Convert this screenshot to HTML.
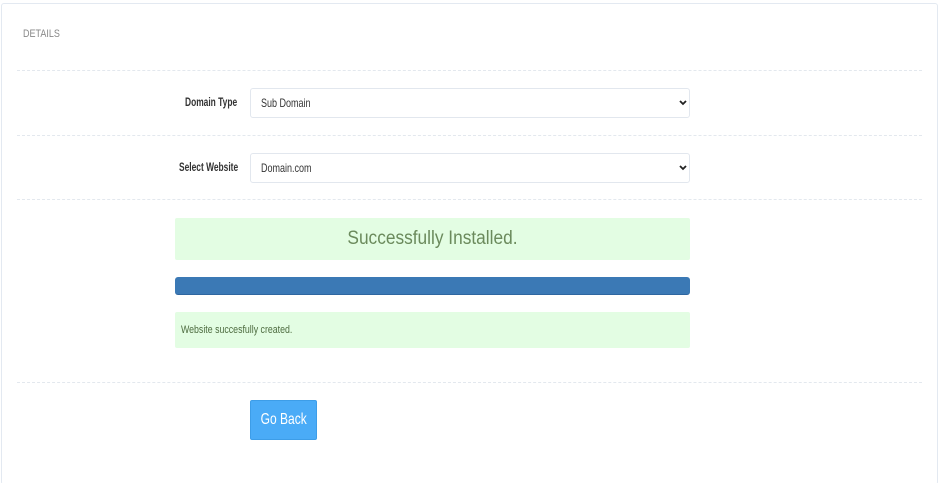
<!DOCTYPE html>
<html style="width:940px;height:483px;overflow:hidden"><head><meta charset="utf-8"><style>
*{box-sizing:border-box;margin:0;padding:0}
body{width:940px;height:483px;background:#fff;position:relative;overflow:hidden;font-family:"Liberation Sans",sans-serif}
.card{position:absolute;left:1px;top:3px;width:937px;height:482px;border:1px solid #e3e9f1;border-radius:3px}
.hr{position:absolute;left:17px;width:905px;border-top:1px dashed #e3e8ee}
.t{position:absolute;font-size:12px}
.c{display:inline-block;transform-origin:0 50%}
.sel{position:absolute;left:250px;width:440px;height:30px;border:1px solid #e2e7ee;border-radius:3px;font-size:12px;color:#333;padding:7px 10px;white-space:nowrap}
.sel svg{position:absolute;right:2px;top:11px}
.lab{position:absolute;font-size:12px;font-weight:bold;color:#333;white-space:nowrap}
</style></head><body>
<div class="card"></div>
<div class="t" style="left:23px;top:28px;color:#888;font-size:11px"><span class="c" style="transform:scaleX(.82)">DETAILS</span></div>
<div class="hr" style="top:70px"></div>
<div class="lab" style="left:185px;top:95px"><span class="c" style="transform:scaleX(.7)">Domain Type</span></div>
<div class="sel" style="top:88px"><span class="c" style="transform:scaleX(.75)">Sub Domain</span><svg width="8" height="6" viewBox="0 0 8 6"><path d="M1 1l3 3 3-3" stroke="#222" stroke-width="1.8" fill="none"/></svg></div>
<div class="hr" style="top:135px"></div>
<div class="lab" style="left:179px;top:160px"><span class="c" style="transform:scaleX(.7)">Select Website</span></div>
<div class="sel" style="top:153px"><span class="c" style="transform:scaleX(.75)">Domain.com</span><svg width="8" height="6" viewBox="0 0 8 6"><path d="M1 1l3 3 3-3" stroke="#222" stroke-width="1.8" fill="none"/></svg></div>
<div class="hr" style="top:199px"></div>
<div style="position:absolute;left:175px;top:218px;width:515px;height:42px;background:#e3fde3;border-radius:2px;text-align:center;font-size:19px;line-height:42px;color:#6b8a5c"><span style="display:inline-block;transform:scaleX(.91)">Successfully Installed.</span></div>
<div style="position:absolute;left:175px;top:277px;width:515px;height:18px;background:#3b79b5;border-radius:3px;border-bottom:1px solid #2e66a0"></div>
<div style="position:absolute;left:175px;top:312px;width:515px;height:36px;background:#e3fde3;border-radius:2px;font-size:11px;line-height:36px;color:#4d6b3f;padding-left:6px;white-space:nowrap"><span class="c" style="transform:scaleX(.8)">Website succesfully created.</span></div>
<div class="hr" style="top:382px"></div>
<div style="position:absolute;left:250px;top:400px;width:67px;height:40px;background:#4aabf7;border:1px solid #3d9de8;border-radius:2px;color:#fff;font-size:16px;line-height:38px;text-align:center;white-space:nowrap"><span style="display:inline-block;transform:scaleX(.75)">Go Back</span></div>
</body></html>
